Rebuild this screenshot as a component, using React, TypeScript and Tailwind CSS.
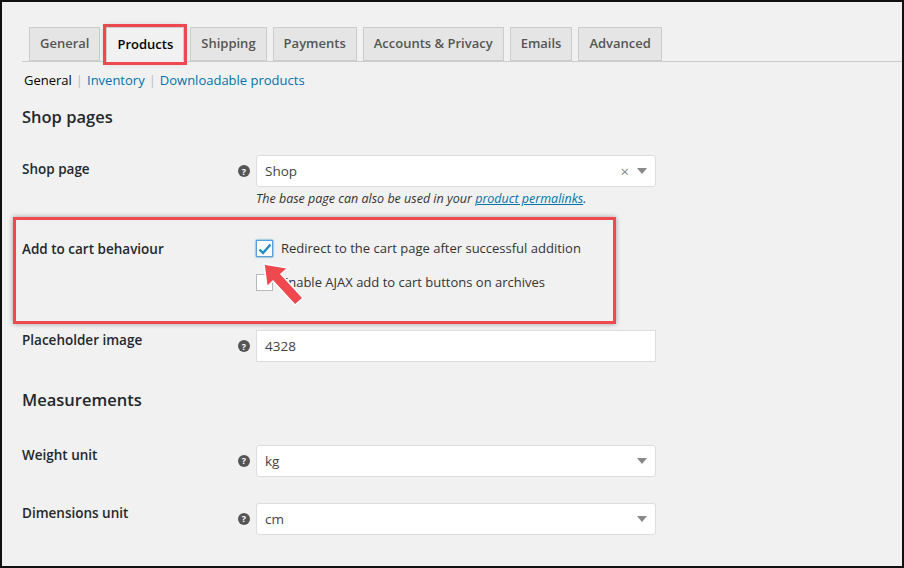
const F = { fontFamily: '"Open Sans", "Noto Sans", sans-serif' };

function Help() {
  return (
    <span className="w-[12px] h-[12px] rounded-full bg-[#555] text-white text-[9px] font-bold flex items-center justify-center leading-none">?</span>
  );
}

function Caret() {
  return <svg width="10" height="6" viewBox="0 0 10 6"><path d="M0 0h10L5 6z" fill="#888" /></svg>;
}

function Row({ label, children, top = "pt-0" }: { label: string; children: React.ReactNode; top?: string }) {
  return (
    <div className="flex">
      <div className={`w-[216px] shrink-0 text-[13.5px] font-semibold text-[#23282d] ${top}`}>{label}</div>
      {children}
    </div>
  );
}

function Select({ value, clear }: { value: string; clear?: boolean }) {
  return (
    <div className="flex items-center">
      <div className="w-[18px]"><Help /></div>
      <div className="w-[400px] h-[32px] bg-white border border-[#ddd] rounded-[3px] flex items-center px-[8px] text-[13.5px] text-[#444]">
        <span className="flex-1">{value}</span>
        {clear && <span className="text-[#888] text-[15px] mr-[8px]">×</span>}
        <Caret />
      </div>
    </div>
  );
}

export default function App() {
  const tabs = ["General", "Products", "Shipping", "Payments", "Accounts & Privacy", "Emails", "Advanced"];
  return (
    <div style={F} className="w-[904px] h-[568px] bg-[#f1f1f1] border-2 border-[#111] overflow-hidden relative text-[#23282d]">
      <div className="ml-[20px] mt-[25px] flex gap-[6px] border-b border-[#ccc] pl-[7px] h-[35px] items-end">
        {tabs.map((t, i) => (
          <div key={t} className={`h-[34px] px-[10px] flex items-center text-[13px] font-semibold border border-[#ccc] ${i === 1 ? "bg-[#f1f1f1] border-b-[#f1f1f1] text-black mb-[-1px] h-[35px] outline-[3px] outline-[#f0484f] shadow-[0_0_6px_rgba(0,0,0,0.3)]" : "bg-[#e5e5e5] text-[#555]"}`}>{t}</div>
        ))}
      </div>
      <div className="ml-[22px] mt-[9px] text-[13px] flex gap-[4px]">
        <span className="text-black">General</span><span className="text-[#bbb]">|</span>
        <span className="text-[#0073aa]">Inventory</span><span className="text-[#bbb]">|</span>
        <span className="text-[#0073aa]">Downloadable products</span>
      </div>
      <div className="ml-[20px] mt-[14px] text-[16.5px] font-semibold">Shop pages</div>
      <div className="ml-[20px] mt-[26px] flex flex-col">
        <Row label="Shop page" top="pt-[4px]">
          <div className="flex flex-col">
            <Select value="Shop" clear />
            <div className="ml-[18px] mt-[3px] text-[12.5px] italic text-[#333]">The base page can also be used in your <span className="text-[#0073aa] underline">product permalinks</span>.</div>
          </div>
        </Row>
        <div className="mt-[30px]">
          <Row label="Add to cart behaviour" top="pt-[0px]">
            <div className="ml-[18px] flex flex-col gap-[14px] text-[13px] text-[#333]">
              <div className="flex items-center gap-[8px]">
                <span className="w-[17px] h-[17px] bg-white border border-[#5b9dd9] shadow-[0_0_2px_#1e8cbe] flex items-center justify-center">
                  <svg width="14" height="12" viewBox="0 0 14 12"><path d="M1.5 6.5l3.5 3.5 7.5-8.5" stroke="#1e8cbe" strokeWidth="2.4" fill="none" /></svg>
                </span>
                Redirect to the cart page after successful addition
              </div>
              <div className="flex items-center gap-[8px]">
                <span className="w-[17px] h-[17px] bg-white border border-[#b4b9be]" />
                Enable AJAX add to cart buttons on archives
              </div>
            </div>
          </Row>
        </div>
        <div className="mt-[38px]">
          <Row label="Placeholder image">
            <div className="flex items-center">
              <div className="w-[18px]"><Help /></div>
              <div className="w-[400px] h-[32px] bg-white border border-[#ddd] flex items-center px-[8px] text-[13.5px] text-[#444]">4328</div>
            </div>
          </Row>
        </div>
        <div className="mt-[26px] text-[16.5px] font-semibold">Measurements</div>
        <div className="mt-[32px]"><Row label="Weight unit"><Select value="kg" /></Row></div>
        <div className="mt-[26px]"><Row label="Dimensions unit"><Select value="cm" /></Row></div>
      </div>
      <div className="absolute left-[11px] top-[215px] w-[603px] h-[107px] border-[3px] border-[#f0484f] shadow-[0_0_5px_rgba(0,0,0,0.35)]" />
      <svg className="absolute left-[255px] top-[255px]" width="60" height="70" viewBox="0 0 60 70">
        <path d="M7 7 L10 30 L16 24 L38 48 L46 41 L24 17 L31 11 Z" fill="#f0484f" stroke="#fff" strokeWidth="1.5" />
      </svg>
    </div>
  );
}
